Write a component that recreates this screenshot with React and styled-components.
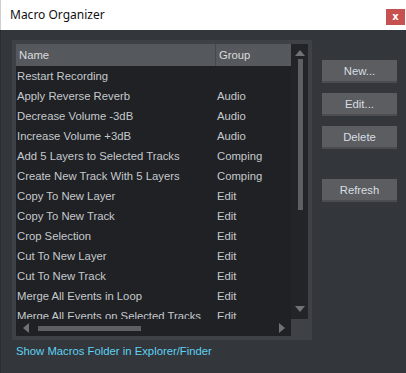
import React from "react";
import styled, { createGlobalStyle } from "styled-components";

const Global = createGlobalStyle`
  html, body { margin: 0; padding: 0; background: #33363b; }
  body { font-family: "Liberation Sans", Arial, sans-serif; }
`;

const Window = styled.div`
  width: 406px;
  height: 373px;
  display: flex;
  flex-direction: column;
  background: #33363b;
  overflow: hidden;
`;

const TitleBar = styled.div`
  height: 30px;
  background: #ffffff;
  display: flex;
  align-items: center;
  justify-content: space-between;
  padding-left: 9px;
  box-sizing: border-box;
  border-left: 1px solid #cfcfcf;
`;

const Title = styled.span`
  font-family: "Noto Sans", "Open Sans", sans-serif;
  font-size: 12px;
  color: #111;
  margin-top: -1px;
`;

const Close = styled.div`
  width: 19px;
  height: 16px;
  margin-right: 1px;
  margin-top: 3px;
  background: #c75050;
  color: #fff;
  font-size: 10px;
  font-weight: bold;
  display: flex;
  align-items: center;
  justify-content: center;
  font-family: "DejaVu Sans", sans-serif;
`;

const Body = styled.div`
  flex: 1;
  display: flex;
  flex-direction: column;
  padding: 10px 0 0 11px;
  border-left: 1px solid #2a2c30;
`;

const Main = styled.div`
  display: flex;
  align-items: flex-start;
`;

const Frame = styled.div`
  width: 300px;
  height: 300px;
  box-sizing: border-box;
  padding: 4px;
  background: #3e4146;
`;

const ListGrid = styled.div`
  display: grid;
  grid-template-columns: 275px 17px;
  grid-template-rows: 275px 17px;
  width: 292px;
  height: 292px;
`;

const List = styled.div`
  background: #1f2125;
  overflow: hidden;
`;

const Row = styled.div`
  display: grid;
  grid-template-columns: 199px 1px 1fr;
  height: ${(p) => (p.$header ? 22 : 20)}px;
  align-items: center;
  background: ${(p) => (p.$header ? "#55585c" : "transparent")};
  color: ${(p) => (p.$header ? "#dadcde" : "#c6c9cc")};
  font-size: 11.3px;
  white-space: nowrap;
`;

const Cell = styled.span`
  padding-left: ${(p) => p.$pad}px;
  overflow: hidden;
`;

const Divider = styled.span`
  align-self: stretch;
  background: ${(p) => (p.$header ? "#45484c" : "transparent")};
`;

const VScroll = styled.div`
  background: #222428;
  display: flex;
  flex-direction: column;
  align-items: center;
  padding-top: 6px;
  box-sizing: border-box;
`;

const VThumb = styled.div`
  width: 5px;
  height: 151px;
  background: #5c5f64;
  margin: 3px 0 0 1px;
`;

const HScroll = styled.div`
  background: #1f2125;
  display: flex;
  align-items: center;
  padding: 0 6px 0 7px;
  box-sizing: border-box;
`;

const HThumb = styled.div`
  width: 103px;
  height: 5px;
  background: #5c5f64;
  margin-left: 9px;
  margin-top: 1px;
`;

const Spacer = styled.div`
  flex: 1;
`;

const Corner = styled.div`
  background: #3e4146;
`;

const DownWrap = styled.div`
  margin-top: auto;
  margin-bottom: 7px;
  margin-left: 1px;
`;

const Buttons = styled.div`
  display: flex;
  flex-direction: column;
  margin-left: 10px;
  margin-top: 20px;
  gap: 10px;
`;

const Button = styled.button`
  width: 75px;
  height: 23px;
  box-sizing: border-box;
  border: none;
  border-bottom: 2px solid #4a4c4f;
  background: #5b5d60;
  color: #d8dde2;
  font-family: "Liberation Sans", Arial, sans-serif;
  font-size: 11.3px;
  padding: 0;
  margin-top: ${(p) => p.$gap || 0}px;
`;

const Link = styled.div`
  margin-top: 5px;
  margin-left: 4px;
  color: #5ed2f2;
  font-size: 11.3px;
`;

const Tri = ({ dir, color = "#6f7276" }) => {
  const pts = {
    up: "0,6 5,0 10,6",
    down: "0,0 10,0 5,6",
    left: "6,0 6,10 0,5",
    right: "0,0 0,10 6,5",
  }[dir];
  const w = dir === "up" || dir === "down" ? 10 : 6;
  const h = dir === "up" || dir === "down" ? 6 : 10;
  return (
    <svg width={w} height={h} viewBox={`0 0 ${w} ${h}`} style={{ display: "block" }}>
      <polygon points={pts} fill={color} />
    </svg>
  );
};

const rows = [
  ["Restart Recording", ""],
  ["Apply Reverse Reverb", "Audio"],
  ["Decrease Volume -3dB", "Audio"],
  ["Increase Volume +3dB", "Audio"],
  ["Add 5 Layers to Selected Tracks", "Comping"],
  ["Create New Track With 5 Layers", "Comping"],
  ["Copy To New Layer", "Edit"],
  ["Copy To New Track", "Edit"],
  ["Crop Selection", "Edit"],
  ["Cut To New Layer", "Edit"],
  ["Cut To New Track", "Edit"],
  ["Merge All Events in Loop", "Edit"],
  ["Merge All Events on Selected Tracks", "Edit"],
];

export default function App() {
  return (
    <>
      <Global />
      <Window>
        <TitleBar>
          <Title>Macro Organizer</Title>
          <Close>x</Close>
        </TitleBar>
        <Body>
          <Main>
            <Frame>
              <ListGrid>
                <List>
                  <Row $header>
                    <Cell $pad={3}>Name</Cell>
                    <Divider $header />
                    <Cell $pad={3}>Group</Cell>
                  </Row>
                  {rows.map(([n, g]) => (
                    <Row key={n}>
                      <Cell $pad={1}>{n}</Cell>
                      <Divider />
                      <Cell $pad={1}>{g}</Cell>
                    </Row>
                  ))}
                </List>
                <VScroll>
                  <Tri dir="up" />
                  <VThumb />
                  <DownWrap>
                    <Tri dir="down" />
                  </DownWrap>
                </VScroll>
                <HScroll>
                  <Tri dir="left" />
                  <HThumb />
                  <Spacer />
                  <Tri dir="right" />
                </HScroll>
                <Corner />
              </ListGrid>
            </Frame>
            <Buttons>
              <Button>New...</Button>
              <Button>Edit...</Button>
              <Button>Delete</Button>
              <Button $gap={20}>Refresh</Button>
            </Buttons>
          </Main>
          <Link>Show Macros Folder in Explorer/Finder</Link>
        </Body>
      </Window>
    </>
  );
}
